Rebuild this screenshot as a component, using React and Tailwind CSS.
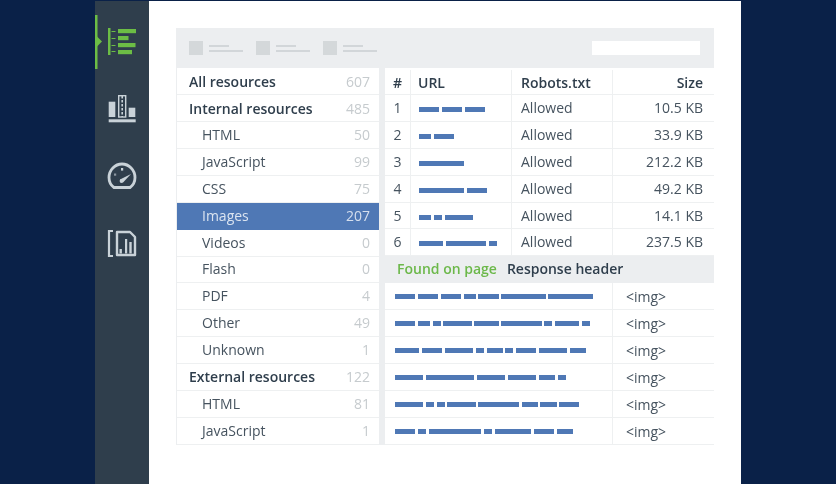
const font = { fontFamily: '"Open Sans", "Liberation Sans", sans-serif' };

const resources = [
  ["All resources", "607", "first"],
  ["Internal resources", "485", "first"],
  ["HTML", "50"],
  ["JavaScript", "99"],
  ["CSS", "75"],
  ["Images", "207", "sel"],
  ["Videos", "0"],
  ["Flash", "0"],
  ["PDF", "4"],
  ["Other", "49"],
  ["Unknown", "1"],
  ["External resources", "122", "top"],
  ["HTML", "81"],
  ["JavaScript", "1"],
];

const rows = [
  ["1", [20, 20, 20.5], "10.5 KB"],
  ["2", [12, 20], "33.9 KB"],
  ["3", [44.5], "212.2 KB"],
  ["4", [44.5, 20], "49.2 KB"],
  ["5", [12, 8, 28], "14.1 KB"],
  ["6", [24, 40, 8], "237.5 KB"],
];

const found = [
  [20, 20, 20, 12, 20, 44, 44],
  [20, 12, 8, 28, 24, 40, 8, 24, 8],
  [24, 20, 28, 8, 16, 8, 20, 28, 16],
  [28, 48, 28, 28, 16, 8],
  [28, 8, 8, 28, 40, 16, 16, 20],
  [20, 8, 52, 8, 36, 20, 16],
];

function Bars({ widths }) {
  return (
    <div className="flex gap-[2.7px]">
      {widths.map((w, i) => (
        <div key={i} className="h-[5px] bg-[#4f78b5]" style={{ width: w * 1.01 + "px" }} />
      ))}
    </div>
  );
}

function ToolGroup() {
  return (
    <div className="flex items-center gap-[6px]">
      <div className="h-[14px] w-[14px] bg-[#d4d8da]" />
      <div className="flex flex-col gap-[3px]">
        <div className="h-[2px] w-[20px] bg-[#d2d6d9]" />
        <div className="h-[2px] w-[34px] bg-[#d2d6d9]" />
      </div>
    </div>
  );
}

function Sidebar() {
  const c = "#c9d2d8";
  return (
    <div className="relative flex h-full w-[54px] shrink-0 flex-col items-center bg-[#2f3e4c]">
      <svg className="absolute left-0 top-[14px]" width="8" height="54" viewBox="0 0 8 54">
        <rect x="0" y="0" width="2.5" height="54" fill="#6cbd45" />
        <path d="M2 21.5 L7 26.5 L2 31.5 Z" fill="#6cbd45" />
      </svg>
      <svg className="mt-[27px]" width="30" height="30" viewBox="0 0 30 30">
        <g fill="#6cbd45">
          <rect x="1" y="0" width="2.5" height="27" />
          <rect x="4.5" y="3" width="4" height="1" />
          <rect x="4.5" y="10" width="4" height="1" />
          <rect x="4.5" y="17" width="4" height="1" />
          <rect x="4.5" y="23" width="4" height="1" />
          <rect x="11" y="1" width="18" height="4.2" />
          <rect x="11" y="8" width="10.5" height="4.2" />
          <rect x="11" y="15" width="17.5" height="4.2" />
          <rect x="11" y="22" width="14" height="4.2" />
        </g>
      </svg>
      <svg className="mt-[36px]" width="30" height="30" viewBox="0 0 30 30">
        <rect x="1.7" y="7.7" width="6.6" height="15.3" fill={c} />
        <rect x="11.7" y="1.7" width="7" height="21.3" fill="none" stroke={c} strokeWidth="1.4" />
        <path d="M15.2 2 V23" stroke={c} strokeWidth="1.6" strokeDasharray="2.5 1.5" />
        <rect x="21.7" y="13.7" width="6.6" height="9.3" fill={c} />
        <rect x="1.7" y="25.3" width="27" height="3" fill={c} />
      </svg>
      <svg className="mt-[37px]" width="30" height="30" viewBox="0 0 30 30">
        <path
          d="M7 26.5 C3.5 24 2 20.5 2 16.5 C2 9 8 3 15 3 C22 3 28 9 28 16.5 C28 20.5 26.5 24 23 26.5 Z"
          fill="none"
          stroke={c}
          strokeWidth="2.8"
          strokeLinejoin="round"
        />
        <path d="M13 18.5 L24 13 L16 21.5 Z" fill={c} />
        <circle cx="14.5" cy="20" r="1.9" fill={c} />
        <rect x="14" y="7" width="2.2" height="2.6" fill={c} />
        <rect x="7" y="12.5" width="2.2" height="2.2" fill={c} opacity="0.6" />
      </svg>
      <svg className="mt-[37px]" width="30" height="30" viewBox="0 0 30 30">
        <path d="M6 3 H2 V28 H6" fill="none" stroke={c} strokeWidth="2.2" />
        <path d="M10 4 H23 L28 9 V27 H10 Z" fill="none" stroke={c} strokeWidth="2.4" strokeLinejoin="round" />
        <rect x="12.5" y="21" width="2.4" height="4.5" fill={c} />
        <rect x="18" y="11" width="2.2" height="14.5" fill={c} />
        <rect x="22.3" y="14" width="2.4" height="11.5" fill={c} />
      </svg>
    </div>
  );
}

function ResourceList() {
  return (
    <div className="grid w-[203px] grid-rows-[repeat(14,1fr)] border-l border-[#eceef0]">
      {resources.map(([name, count, kind], i) => {
        const sel = kind === "sel";
        const first = kind === "first";
        const top = first || kind === "top";
        return (
          <div
            key={i}
            className={
              "flex min-h-0 items-center justify-between pr-[9px] text-[14px] " +
              (sel ? "bg-[#4f78b5] " : "border-b border-[#eef0f1] bg-white ") +
              (first ? "pt-[2px] " : "pb-[1px] ") +
              (top ? "pl-[12px]" : "pl-[25px]")
            }
          >
            <span
              className={
                sel
                  ? "font-medium text-[#dbe4f0]"
                  : top
                    ? "font-semibold text-[#2f3e4c]"
                    : "font-medium text-[#46535f]"
              }
            >
              {name}
            </span>
            <span className={sel ? "font-medium text-[#d5dfee]" : "font-normal text-[#c6cbce]"}>{count}</span>
          </div>
        );
      })}
    </div>
  );
}

function ResultTables() {
  return (
    <div className="flex flex-1 flex-col">
      <div className="grid h-[27px] grid-cols-[26px_101px_101px_101px] border-b border-[#eef0f1] bg-white pt-[2px] text-[14px] font-semibold text-[#2f3e4c]">
        <div className="flex items-center justify-center border-r border-[#eef0f1]">#</div>
        <div className="flex items-center border-r border-[#eef0f1] pl-[7px]">URL</div>
        <div className="flex items-center border-r border-[#eef0f1] pl-[9px]">Robots.txt</div>
        <div className="flex items-center justify-end pr-[11px]">Size</div>
      </div>
      {rows.map(([n, bars, size]) => (
        <div
          key={n}
          className="grid h-[26.9px] grid-cols-[26px_101px_101px_101px] border-b border-[#eef0f1] bg-white text-[14px] font-medium text-[#46535f]"
        >
          <div className="flex items-center justify-center border-r border-[#eef0f1] pb-[1px]">{n}</div>
          <div className="flex items-center border-r border-[#eef0f1] pl-[8px] pt-[3px]">
            <Bars widths={bars} />
          </div>
          <div className="flex items-center border-r border-[#eef0f1] pb-[1px] pl-[9px]">Allowed</div>
          <div className="flex items-center justify-end pb-[1px] pr-[11px]">{size}</div>
        </div>
      ))}
      <div className="flex h-[27px] items-center gap-[10px] pb-[2px] pl-[12px] text-[14px] font-semibold">
        <span className="text-[#6cb84a]">Found on page</span>
        <span className="text-[#2f3e4c]">Response header</span>
      </div>
      <div className="flex flex-1 flex-col">
        {found.map((bars, i) => (
          <div key={i} className="grid flex-1 grid-cols-[228px_101px] border-b border-[#eef0f1] bg-white">
            <div className="flex items-center border-r border-[#eef0f1] pl-[10px] pt-[1px]">
              <Bars widths={bars} />
            </div>
            <div className="flex items-center pl-[13px] pt-[1px] text-[14px] text-[#46535f]">{"<img>"}</div>
          </div>
        ))}
      </div>
    </div>
  );
}

export default function App() {
  return (
    <div className="h-[484px] w-[836px] overflow-hidden bg-[#0a2148] pl-[95px] pr-[95px] pt-[1px]" style={font}>
      <div className="flex h-full w-[646px] blur-[0.5px]">
        <Sidebar />
        <div className="flex-1 bg-white pl-[27px] pr-[27px] pt-[27px]">
          <div className="flex h-[417px] flex-col bg-[#eceef0]">
            <div className="flex h-[40px] shrink-0 items-center gap-[13px] pl-[13px] pr-[14px]">
              <ToolGroup />
              <ToolGroup />
              <ToolGroup />
              <div className="ml-auto h-[14px] w-[108px] bg-white" />
            </div>
            <div className="flex flex-1 gap-[6px]">
              <ResourceList />
              <ResultTables />
            </div>
          </div>
        </div>
      </div>
    </div>
  );
}
